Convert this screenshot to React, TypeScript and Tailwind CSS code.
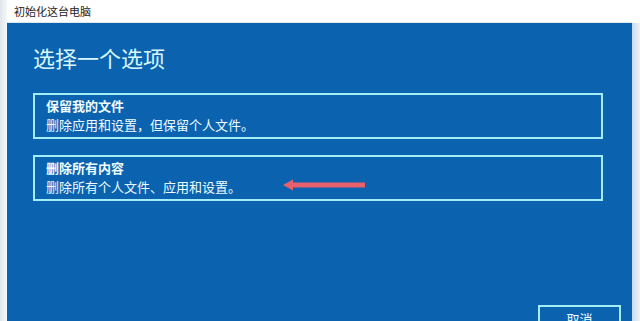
import React from 'react';

const options = [
  { title: '保留我的文件', desc: '删除应用和设置，但保留个人文件。', arrow: false },
  { title: '删除所有内容', desc: '删除所有个人文件、应用和设置。', arrow: true },
];

const font = { fontFamily: '"Microsoft YaHei", "Noto Sans CJK SC", sans-serif' };

export default function App() {
  return (
    <div className="w-[640px] h-[321px] overflow-hidden flex bg-[#e9eef3]" style={font}>
      {/* window frame left */}
      <div className="w-[7px] bg-gradient-to-r from-[#dfe6ec] to-[#f4f7f9]" />
      <div className="flex-1 flex flex-col">
        {/* title bar */}
        <div className="h-[23px] bg-white border-b border-[#e3e6e9] flex items-center pl-[7px] text-[11px] text-[#222]">
          初始化这台电脑
        </div>
        <div className="flex-1 bg-[#0b63b0] flex flex-col pl-[26px]">
          <div className="pr-[29px]">
            <h1 className="mt-[21px] text-[22px] leading-[26px] text-[#d8f6fb]">选择一个选项</h1>
            <div className="mt-[23px] flex flex-col gap-[16px]">
              {options.map((o) => (
                <div
                  key={o.title}
                  className="relative h-[46px] border-2 border-[#a3eef6] flex flex-col pt-[1px] pl-[11px] text-[#eefcff]"
                >
                  <div className="text-[13px] leading-[19px] font-bold">{o.title}</div>
                  <div className="text-[13px] leading-[19px]">{o.desc}</div>
                  {o.arrow && (
                    <svg className="absolute left-[248px] top-[22px]" width="84" height="12" viewBox="0 0 84 12">
                      <rect x="8" y="3.5" width="74" height="5" fill="#e7606c" />
                      <path d="M0 6 L10 0.5 L10 11.5 Z" fill="#e7606c" />
                    </svg>
                  )}
                </div>
              ))}
            </div>
          </div>
          <div className="flex-1" />
          <div className="flex justify-end pr-[11px]">
            <div className="w-[83px] h-[16px] overflow-hidden border-2 border-b-0 border-[#a3eef6] flex justify-center pt-[4px] text-[13px] leading-[16px] text-[#eefcff]">
              取消
            </div>
          </div>
        </div>
      </div>
      {/* window frame right */}
      <div className="w-[8px] flex flex-col">
        <div className="h-[23px] bg-white" />
        <div className="flex-1 bg-gradient-to-r from-[#c9dbea] to-[#eef3f7]" />
      </div>
    </div>
  );
}
